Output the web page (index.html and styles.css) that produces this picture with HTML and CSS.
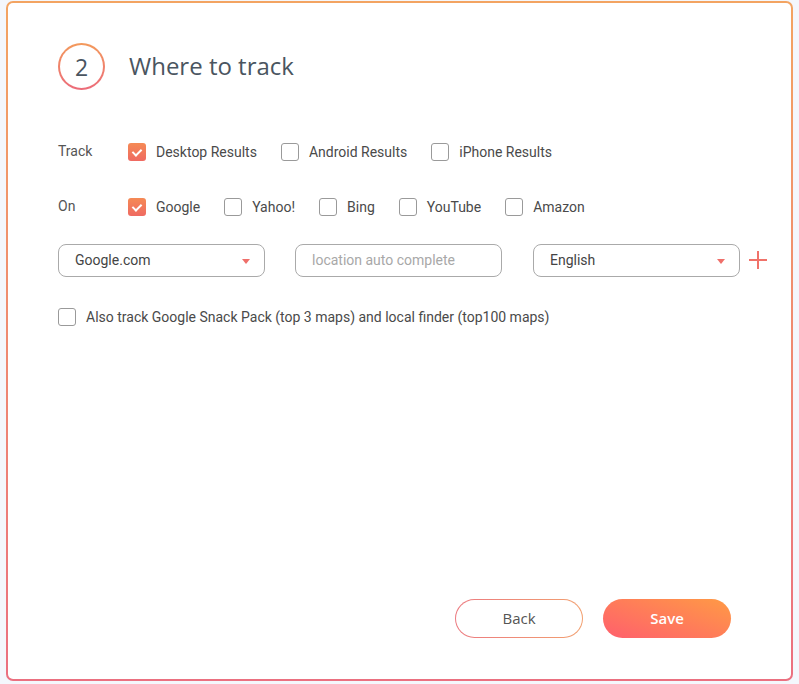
FILE: index.html
```html
<!DOCTYPE html>
<html lang="en">
<head>
    <meta charset="UTF-8">
    <meta name="viewport" content="width=device-width, initial-scale=1.0">
    <title>Where to track</title>
    <link rel="stylesheet" href="styles.css">
</head>
<body>
    <div class="card">
        <div class="step-head">
            <div class="step-num">2</div>
            <h1>Where to track</h1>
        </div>

        <div class="opt-row row-track">
            <span class="row-label">Track</span>
            <label class="check"><span class="box checked"></span>Desktop Results</label>
            <label class="check"><span class="box"></span>Android Results</label>
            <label class="check"><span class="box"></span>iPhone Results</label>
        </div>

        <div class="opt-row row-on">
            <span class="row-label">On</span>
            <label class="check"><span class="box checked"></span>Google</label>
            <label class="check"><span class="box"></span>Yahoo!</label>
            <label class="check"><span class="box"></span>Bing</label>
            <label class="check"><span class="box"></span>YouTube</label>
            <label class="check"><span class="box"></span>Amazon</label>
        </div>

        <div class="field-row">
            <div class="field select">Google.com<span class="caret"></span></div>
            <div class="field placeholder">location auto complete</div>
            <div class="field select">English<span class="caret"></span></div>
            <span class="add-btn">
                <svg width="18" height="18" viewBox="0 0 18 18"><path d="M9 0v18M0 9h18" stroke="#f0726a" stroke-width="2" fill="none"/></svg>
            </span>
        </div>

        <label class="check snack"><span class="box"></span>Also track Google Snack Pack (top 3 maps) and local finder (top100 maps)</label>

        <div class="actions">
            <button class="btn btn-back">Back</button>
            <button class="btn btn-save">Save</button>
        </div>
    </div>
</body>
</html>
```

FILE: styles.css
```css
:root {
    --text: #4d5057;
}

* {
    margin: 0;
    padding: 0;
    box-sizing: border-box;
}

body {
    background: #f4f7fc;
    padding: 1px 6px 3px 6px;
    font-family: Roboto, "Liberation Sans", sans-serif;
    color: var(--text);
}

.card {
    height: 680px;
    border: 2px solid transparent;
    border-radius: 7px;
    background: linear-gradient(#fff, #fff) padding-box,
                linear-gradient(180deg, #f3a462, #eb7080) border-box;
    padding: 40px 20px 41px 50px;
    display: flex;
    flex-direction: column;
}

.step-head {
    display: flex;
    align-items: center;
    gap: 24px;
}

.step-num {
    width: 47px;
    height: 47px;
    border-radius: 50%;
    border: 2px solid transparent;
    background: linear-gradient(#fff, #fff) padding-box,
                linear-gradient(180deg, #f39a5c, #ec6b7a) border-box;
    display: flex;
    align-items: center;
    justify-content: center;
    font-family: "Open Sans", sans-serif;
    font-size: 23px;
    color: #4a5560;
}

h1 {
    font-family: "Open Sans", sans-serif;
    font-weight: 400;
    font-size: 24px;
    color: #4a5560;
    margin-top: -2px;
}

.opt-row {
    display: flex;
    align-items: center;
    font-size: 14px;
}

.row-track {
    margin-top: 52px;
}

.row-on {
    margin-top: 36px;
}

.row-label {
    width: 70px;
    color: #555;
    margin-top: -2px;
}

.check {
    display: flex;
    align-items: center;
    gap: 10px;
    margin-right: 24px;
    color: #4a4a4a;
    font-size: 14px;
}

.check .box {
    margin-top: 1px;
}

.box {
    width: 18px;
    height: 18px;
    border: 1px solid #9a9a9a;
    border-radius: 3px;
    position: relative;
    flex-shrink: 0;
}

.box.checked {
    border: none;
    background: linear-gradient(180deg, #f58a55, #ef6a62);
}

.box.checked::after {
    content: '';
    position: absolute;
    left: 6px;
    top: 4px;
    width: 4px;
    height: 7px;
    border: solid #fff;
    border-width: 0 2px 2px 0;
    transform: rotate(45deg);
}

.field-row {
    display: flex;
    align-items: center;
    margin-top: 28px;
}

.field {
    width: 207px;
    height: 33px;
    flex-shrink: 0;
    border: 1px solid #aaa;
    border-radius: 8px;
    padding: 0 16px 1px;
    display: flex;
    align-items: center;
    font-size: 14px;
    color: #444;
    position: relative;
    margin-right: 30px;
}

.field.placeholder {
    color: #a8a8a8;
    margin-right: 31px;
}

.field:nth-child(3) {
    margin-right: 9px;
}

.caret {
    position: absolute;
    right: 14px;
    top: 14px;
    width: 0;
    height: 0;
    border-left: 4px solid transparent;
    border-right: 4px solid transparent;
    border-top: 5px solid #ef6f6a;
}

.add-btn {
    display: flex;
    margin-top: -2px;
}

.snack {
    margin-top: 30px;
    gap: 10px;
}

.actions {
    margin-top: auto;
    display: flex;
    justify-content: flex-end;
    gap: 20px;
    padding-right: 40px;
}

.btn {
    width: 128px;
    height: 39px;
    border-radius: 20px;
    font-family: "Open Sans", sans-serif;
    font-size: 15px;
    padding-bottom: 2px;
    cursor: pointer;
}

.btn-back {
    border: 1px solid transparent;
    background: linear-gradient(#fff, #fff) padding-box,
                linear-gradient(90deg, #ec7a80, #f2a070) border-box;
    color: #555;
}

.btn-save {
    border: none;
    background: linear-gradient(20deg, #ff5f6d, #ff9a45);
    color: #fff;
    font-weight: 600;
}
```
